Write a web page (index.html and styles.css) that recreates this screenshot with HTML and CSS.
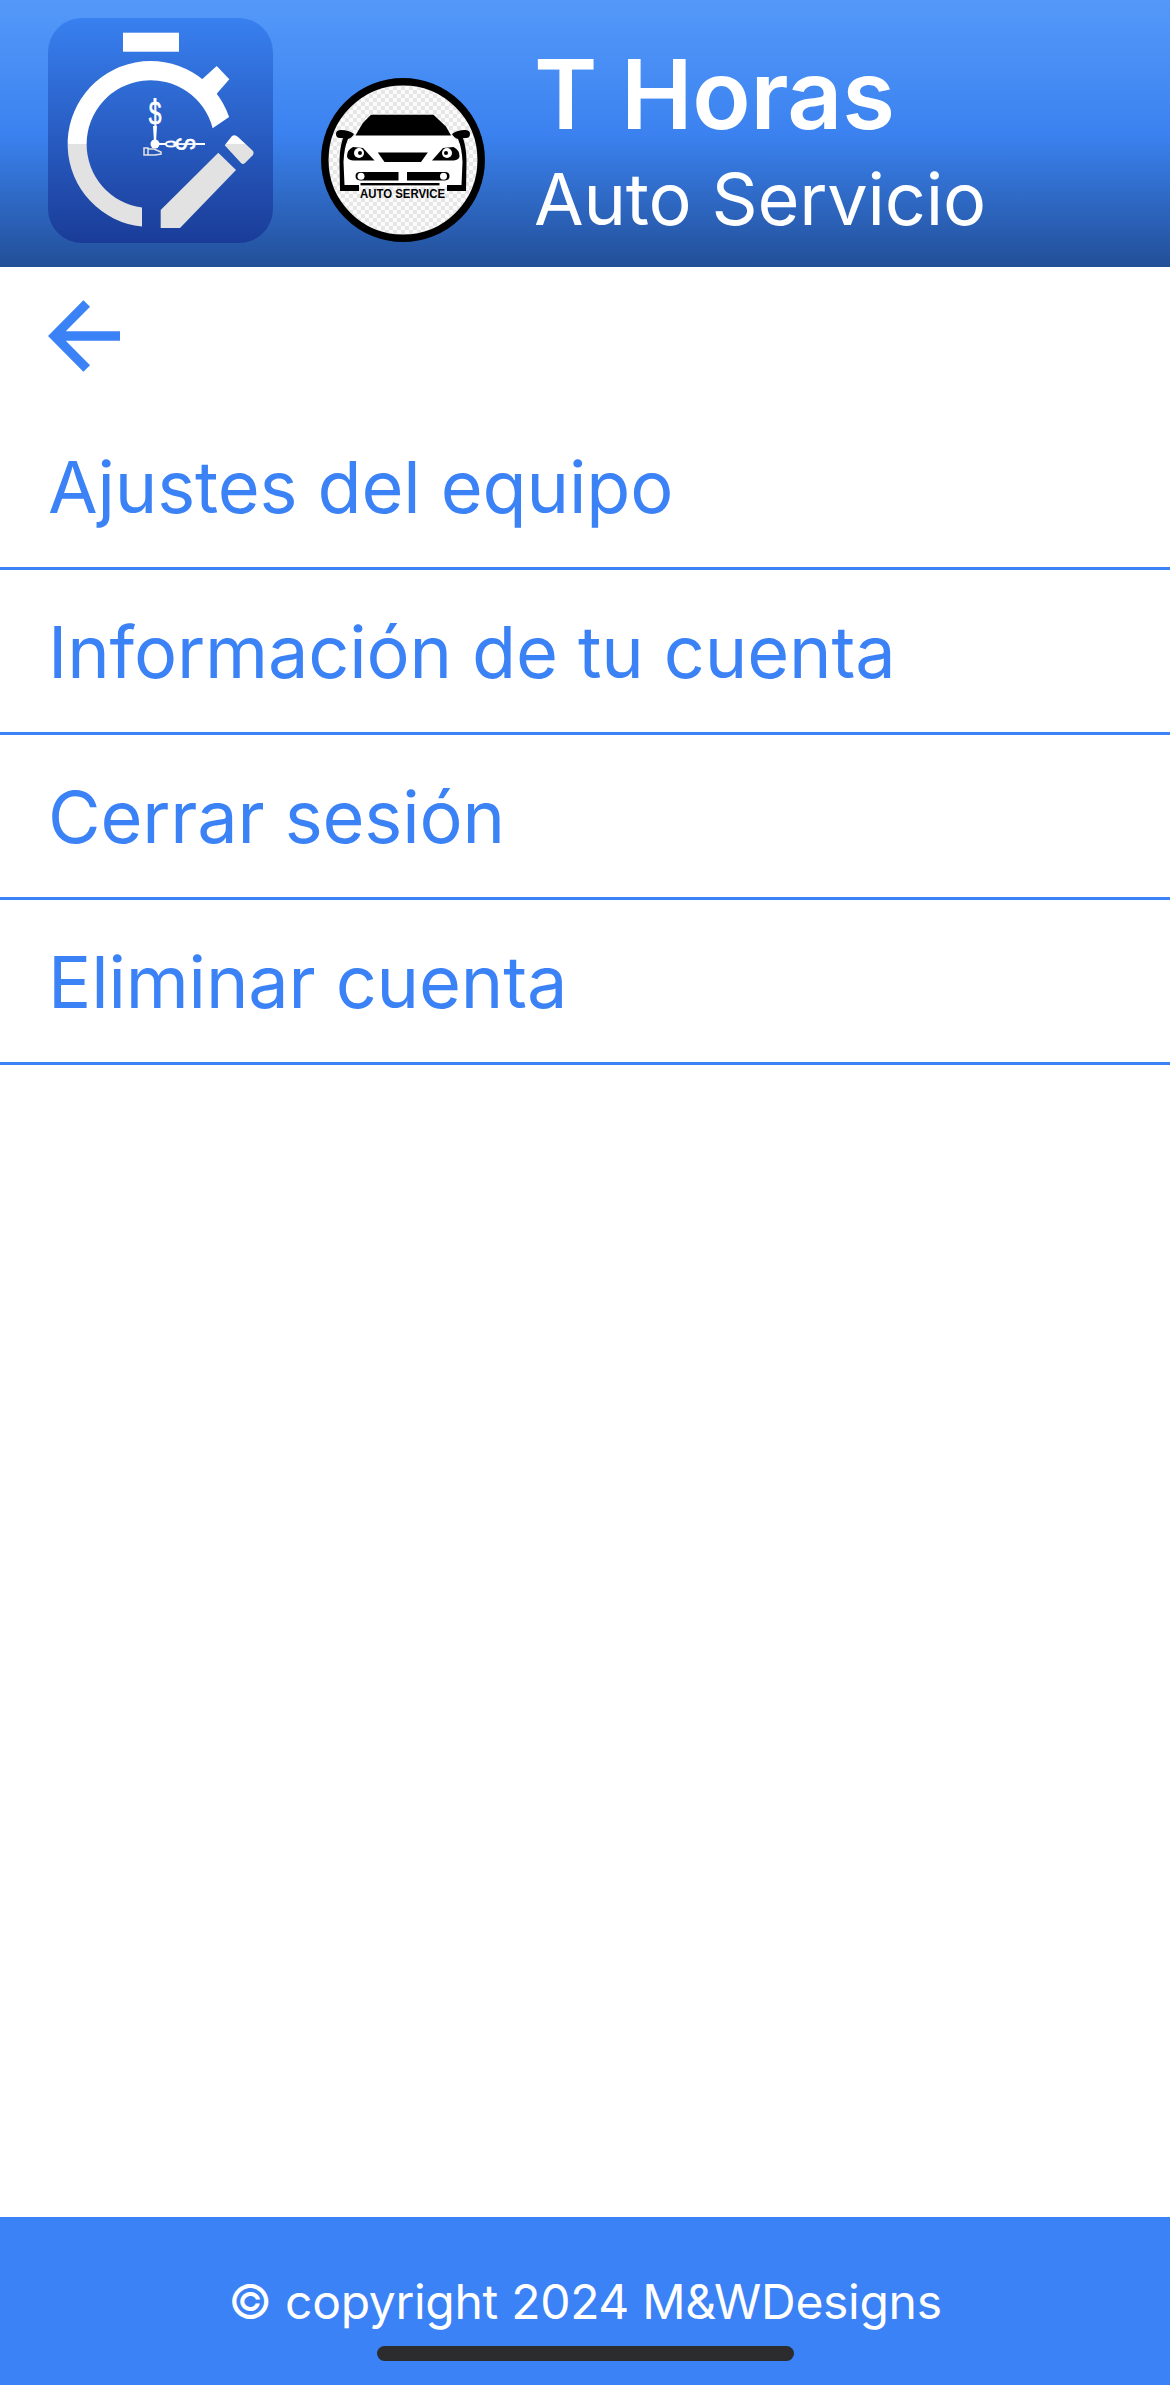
FILE: index.html
```html
<!DOCTYPE html>
<html lang="es">
<head>
<meta charset="utf-8">
<title>T Horas</title>
<link rel="stylesheet" href="styles.css">
</head>
<body>
<div class="page">
  <header class="header">
    <svg class="app-icon" viewBox="0 0 225 225" aria-hidden="true">
      <defs>
        <linearGradient id="ig" x1="0" y1="0" x2="0" y2="1"><stop offset="0" stop-color="#3880f0"/><stop offset="1" stop-color="#1a3c98"/></linearGradient>
        <linearGradient id="wg" x1="0" y1="0" x2="0" y2="225" gradientUnits="userSpaceOnUse"><stop offset="0.56" stop-color="#fff"/><stop offset="0.56" stop-color="#e2e2e2"/></linearGradient>
      </defs>
      <rect width="225" height="225" rx="34" fill="url(#ig)"/>
      <g fill="url(#wg)">
        <rect x="75" y="14.7" width="56" height="19"/>
        <path d="M94 208.6A83 83 0 1 1 181.100 99L164.600 110.200A64 64 0 1 0 94 189.600Z"/>
        <path d="M168.700 48L181.300 61.300L165 80L150 65Z"/>
        <path d="M170.300 134.700L188 152L132 210H112.700V192Z"/>
        <path d="M184 118Q187 116 190 119L204 132Q206.500 134 205 137L197 145Q195 147 193 145L176.700 127.300Z"/>
      </g>
      <path d="M105.500 80H108.500V86H105.500ZM105 108L109 108L108 124H106Z" fill="#fff"/>
      <text class="glyph" transform="translate(107 106) scale(0.95 1.3)" text-anchor="middle">$</text>
      <circle cx="107" cy="126" r="4.500" fill="#fff"/>
      <path d="M111 126H118M148 126H157" stroke="#fff" stroke-width="2"/>
      <ellipse cx="123" cy="126" rx="5" ry="2.500" fill="none" stroke="#fff" stroke-width="2"/>
      <text class="glyph" transform="translate(138 126) rotate(90) scale(0.9 1.15)" text-anchor="middle" y="8.500">$</text>
      <path d="M96 130H100V137H96ZM100 131H106L113 134V136L107 137H100Z" fill="none" stroke="#e2e2e2" stroke-width="1.500"/>
    </svg>
    <svg class="logo" viewBox="0 0 164 164" aria-hidden="true">
      <defs>
        <pattern id="chk" width="8" height="8" patternUnits="userSpaceOnUse"><rect width="8" height="8" fill="#fbfbfb"/><rect width="4" height="4" fill="#e6e6e6"/><rect x="4" y="4" width="4" height="4" fill="#e6e6e6"/></pattern>
      </defs>
      <circle cx="82" cy="82" r="78.200" fill="url(#chk)" stroke="#000" stroke-width="7.500"/>
      <path d="M34 57H130L145 72L142 109H21L20 72Z" fill="#fff"/>
      <path d="M50 36.700H112.500L125 48.400L130 57.400H34.500L41.800 45Z" fill="#000"/>
      <path d="M15 56Q15 52 20 52Q28 52 33 56Q31 60 27 61Q23 70 22.500 84L23.500 107H38V113H19L18.500 84Q18.500 70 22 60H19Q15 60 15 56Z" fill="#000"/>
      <path d="M149 56Q149 52 144 52Q136 52 131 56Q133 60 137 61Q141 70 141.500 84L140.500 107H126V113H145L145.500 84Q145.500 70 142 60H145Q149 60 149 56Z" fill="#000"/>
      <path d="M26 78Q26 72 32 69L42 70L53.500 82.400H32Q26 82 26 78Z" fill="#000"/>
      <path d="M138.500 78Q138.500 72 132.500 69L122 70L111 82.400H132.500Q138.500 82 138.500 78Z" fill="#000"/>
      <circle cx="38" cy="75" r="5" fill="#fff"/><circle cx="126" cy="75" r="5" fill="#fff"/>
      <circle cx="39" cy="75" r="2" fill="#000"/><circle cx="125" cy="75" r="2" fill="#000"/>
      <path d="M56.800 74.400H106.800L100 84H63.500Z" fill="#000"/>
      <path d="M39 94H77.500V102.400H39Q34.500 102.400 34.500 98Q34.500 94 39 94Z" fill="#000"/>
      <path d="M86 94H124Q128.500 94 128.500 98Q128.500 102.400 124 102.400H86Z" fill="#000"/>
      <circle cx="40" cy="98.200" r="3.500" fill="#fff"/><circle cx="122.500" cy="98.200" r="3.500" fill="#fff"/>
      <rect x="39.500" y="105" width="79" height="2.400" fill="#000"/>
      <text class="logo-text" x="39" y="120" textLength="85" lengthAdjust="spacingAndGlyphs">AUTO SERVICE</text>
    </svg>
    <div class="titles">
      <div class="title">T Horas</div>
      <div class="subtitle">Auto Servicio</div>
    </div>
  </header>
  <main class="main">
    <div class="back">
      <svg class="back-icon" viewBox="0 0 74 76" aria-hidden="true"><path d="M72 38H8M38.700 5.500L6.500 38L38.700 70.500" fill="none" stroke="#3b82f6" stroke-width="9.400"/></svg>
    </div>
    <nav class="menu">
      <a class="item">Ajustes del equipo</a>
      <a class="item">Información de tu cuenta</a>
      <a class="item">Cerrar sesión</a>
      <a class="item">Eliminar cuenta</a>
    </nav>
  </main>
  <footer class="footer">
    <span class="copy">© copyright 2024 M&amp;WDesigns</span>
    <span class="home-bar"></span>
  </footer>
</div>
</body>
</html>
```
FILE: styles.css
```css
* { box-sizing: border-box; }
html, body { margin: 0; padding: 0; }
body { background: #fff; font-family: Inter, "Liberation Sans", sans-serif; }
.page { width: 1170px; height: 2385px; display: flex; flex-direction: column; }
.header {
  height: 267px;
  flex: none;
  display: flex;
  align-items: flex-start;
  padding: 18px 0 0 48px;
  background: linear-gradient(180deg, #5499f9 0%, #3b82f0 50%, #224f98 100%);
  color: #fff;
}
.app-icon { width: 225px; height: 225px; flex: none; }
.glyph { font-family: "Liberation Sans", sans-serif; font-size: 24px; fill: #fff; stroke: #fff; stroke-width: 0.5px; }
.logo { width: 164px; height: 164px; flex: none; margin: 60px 0 0 48px; }
.logo-text { font-family: "Liberation Sans", sans-serif; font-weight: 700; font-size: 13px; fill: #000; }
.titles { margin-left: 49px; display: flex; flex-direction: column; }
.title { font-size: 96px; font-weight: 600; line-height: 116px; margin-top: 18px; letter-spacing: -0.3px; }
.subtitle { font-size: 72px; font-weight: 400; line-height: 88px; margin-top: 3px; letter-spacing: -0.2px; }
.main { flex: 1; }
.back { height: 138px; padding: 31px 0 0 48px; }
.back-icon { width: 74px; height: 76px; display: block; }
.menu { display: flex; flex-direction: column; }
.item {
  height: 165px;
  display: flex;
  align-items: center;
  padding: 0 0 0 48px;
  border-bottom: 3px solid #3b82f6;
  font-size: 72px;
  letter-spacing: -0.15px;
  color: #3b82f6;
}
.footer {
  height: 168px;
  flex: none;
  background: #3b82f6;
  display: flex;
  flex-direction: column;
  align-items: center;
  color: #fff;
}
.copy { font-size: 48px; line-height: 58px; margin-top: 56px; letter-spacing: -0.3px; }
.home-bar { width: 417px; height: 15px; margin-top: 15px; border-radius: 8px; background: #2c2c2e; }
```
